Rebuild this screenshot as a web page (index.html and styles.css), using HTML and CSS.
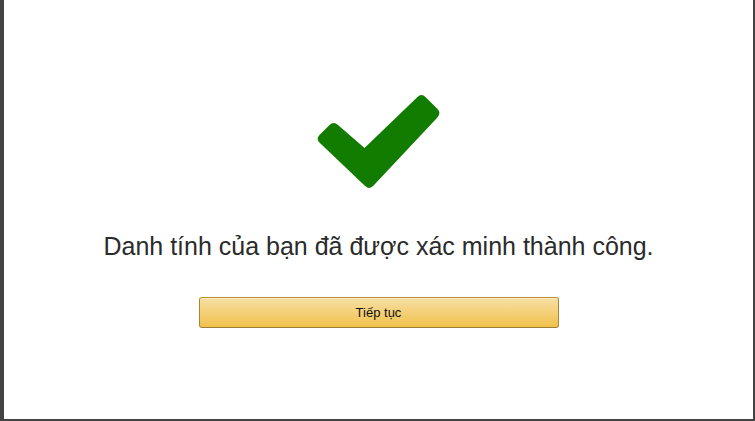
FILE: index.html
```html
<!DOCTYPE html>
<html lang="vi">
<head>
<meta charset="utf-8">
<title>Xác minh thành công</title>
<link rel="stylesheet" href="styles.css">
</head>
<body>
<div class="frame">
  <main class="content">
    <svg class="check" viewBox="308.5 85 140 110" width="140" height="110" aria-hidden="true">
      <path fill="#127c00" d="M 319.4 143.1 Q 315 139 319.2 134.8 L 328.8 125.2 Q 333 121 337.5 124.9 L 364 148 L 416.7 97.2 Q 421 93 425.2 97.2 L 436.8 108.8 Q 441 113 436.9 117.4 L 373.1 185.6 Q 369 190 364.6 185.9 Z"/>
    </svg>
    <h1 class="title">Danh tính của bạn đã được xác minh thành công.</h1>
    <button class="btn-primary" type="button">Tiếp tục</button>
  </main>
</div>
</body>
</html>
```
FILE: styles.css
```css
html, body {
  margin: 0;
  padding: 0;
  background: #ffffff;
}

.frame {
  box-sizing: border-box;
  width: 755px;
  height: 421px;
  border-left: 4px solid #434343;
  border-right: 2px solid #434343;
  border-bottom: 2px solid #434343;
  background: #ffffff;
}

.content {
  display: flex;
  flex-direction: column;
  align-items: center;
  padding-top: 85px;
  font-family: "Liberation Sans", Arial, sans-serif;
}

.check {
  display: block;
}

.title {
  margin: 37px 0 0;
  font-size: 25px;
  line-height: 28px;
  font-weight: normal;
  color: #2b2b2b;
  white-space: nowrap;
}

.btn-primary {
  box-sizing: border-box;
  margin-top: 37px;
  width: 360px;
  height: 31px;
  padding: 0;
  border: 1px solid;
  border-color: #b9952f #a88734 #9c7e31;
  border-radius: 3px;
  background: linear-gradient(to bottom, #f7dfa5, #f0c14b);
  box-shadow: inset 0 1px 0 rgba(255, 255, 255, 0.4);
  font-family: "Liberation Sans", Arial, sans-serif;
  font-size: 13px;
  color: #111111;
  cursor: pointer;
}
```
